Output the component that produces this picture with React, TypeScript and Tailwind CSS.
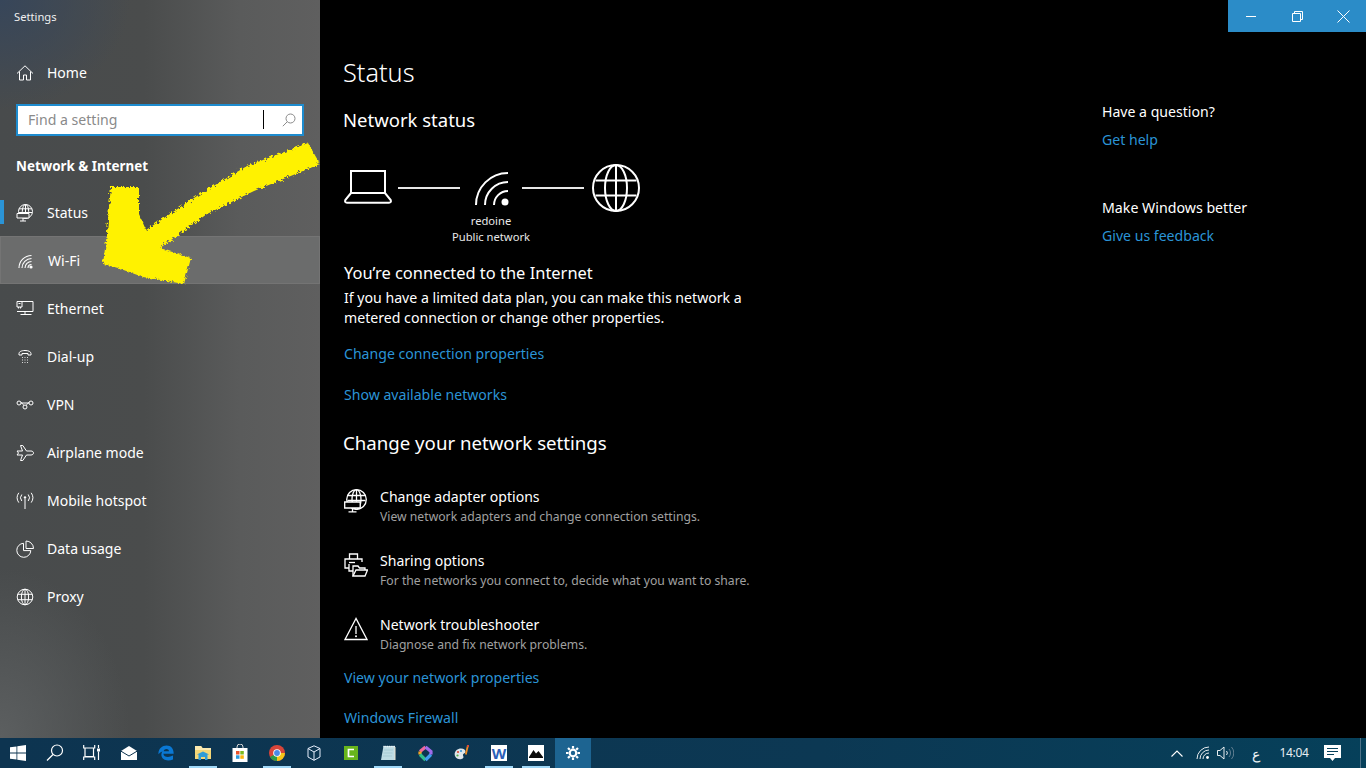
import type { ReactNode } from "react"

/* ─── Icons ─────────────────────────────────────────────────────────── */
function Ico({ children, size = 18, box = 18 }: { children: ReactNode; size?: number; box?: number }) {
  return (
    <svg width={size} height={size} viewBox={`0 0 ${box} ${box}`} fill="none" stroke="currentColor" strokeWidth={1} className="shrink-0">
      {children}
    </svg>
  )
}

const HomeIcon = () => (
  <Ico>
    <path d="M1 9.500 9 1.800l8 7.700M3.500 7.500V16h4v-5h3v5h4V7.500" />
  </Ico>
)
const GlobeStandIcon = () => (
  <Ico>
    <circle cx="9.500" cy="7.500" r="7" />
    <ellipse cx="9.500" cy="7.500" rx="3.200" ry="7" />
    <path d="M3 4.800h13M9.500 .5v9M3 8.500h13" />
    <path d="M1 9.500h12v4.500H1z" fill="#4a4c4d" />
    <path d="M7 14v3M4 17h6" />
  </Ico>
)
const WifiSmall = () => (
  <Ico>
    <path d="M2 16A12.500 12.500 0 0 1 14.500 3.500M5 16A9.500 9.500 0 0 1 14.500 6.500M8 16A6.500 6.500 0 0 1 14.500 9.500M11 16A3.500 3.500 0 0 1 14.500 12.500" strokeWidth={1.100} />
    <circle cx="14" cy="15" r="1.600" fill="currentColor" stroke="none" />
  </Ico>
)
const EthernetIcon = () => (
  <Ico>
    <path d="M6 1.500h11v10H1M9 11.500v3M4.500 14.500h11" />
    <path d="M1 1.500h5V7H1zM2.500 7v1.500M4.500 7v1.500" />
    <path d="M2.500 3.500h2" />
  </Ico>
)
const DialIcon = () => (
  <Ico>
    <path d="M3 7V5.500C3 3.700 5.500 2.500 9 2.500s6 1.200 6 3V7h-3V5.500H6V7z" />
    <path d="M6 9.500h.8M8.600 9.500h.8M11.200 9.500h.8M6 12h.8M8.600 12h.8M11.200 12h.8M6 14.500h.8M8.600 14.500h.8M11.200 14.500h.8" />
  </Ico>
)
const VpnIcon = () => (
  <Ico>
    <circle cx="3" cy="7" r="2" />
    <circle cx="15" cy="7" r="2" />
    <circle cx="9" cy="11" r="2" />
    <path d="M5 6.500c2 1.500 2.500 2 2.800 3M13 6.500c-2 1.500-2.500 2-2.800 3M5 7h8" />
  </Ico>
)
const PlaneIcon = () => (
  <Ico>
    <path d="M1 7h5.500L4.500 1.500h2.300L10.500 7H15c1.500 0 2.500.9 2.500 2s-1 2-2.500 2h-4.500l-3.700 5.500H4.500l2-5.500H1l1.500-2z" />
  </Ico>
)
const HotspotIcon = () => (
  <Ico>
    <path d="M9 7v10" />
    <circle cx="9" cy="5.500" r="1.200" fill="currentColor" stroke="none" />
    <path d="M5.800 2.500a5 5 0 0 0 0 6.500M12.200 2.500a5 5 0 0 1 0 6.500M2.800.8a8.500 8.500 0 0 0 0 9.800M15.200.8a8.500 8.500 0 0 1 0 9.800" />
  </Ico>
)
const PieIcon = () => (
  <Ico>
    <path d="M7.500 3.300a7 7 0 1 0 7.300 7.300H7.500z" />
    <path d="M10 1v7.500h7.500A7.500 7.500 0 0 0 10 1z" />
  </Ico>
)
const GlobeIcon = () => (
  <Ico>
    <circle cx="9" cy="9" r="7.800" />
    <ellipse cx="9" cy="9" rx="3.600" ry="7.800" />
    <path d="M1.800 6.300h14.400M1.800 11.700h14.400M9 1.200v15.600" />
  </Ico>
)
const SearchIcon = () => (
  <svg width="14" height="14" viewBox="0 0 14 14" fill="none" stroke="currentColor" strokeWidth={1}>
    <circle cx="8.500" cy="5.500" r="4.500" />
    <path d="M5.200 8.800.8 13.200" />
  </svg>
)

const DiagramLaptop = () => (
  <svg width="48" height="48" viewBox="0 0 48 48" fill="none" stroke="white" strokeWidth={2}>
    <path d="M7 29V7h34v22" />
    <path d="M7 29 1.300 36q-.8 2.700 1.700 2.700h42q2.500 0 1.700-2.700L41 29z" />
  </svg>
)
const DiagramWifi = () => (
  <svg width="48" height="48" viewBox="0 0 48 48" fill="none" stroke="white" strokeWidth={2}>
    <path d="M9 41A32 32 0 0 1 41 9M18 41A23 23 0 0 1 41 18M27 41A14 14 0 0 1 41 27" />
    <circle cx="38" cy="38" r="3.500" fill="white" stroke="none" />
  </svg>
)
const DiagramGlobe = () => (
  <svg width="48" height="48" viewBox="0 0 48 48" fill="none" stroke="white" strokeWidth={2}>
    <circle cx="24" cy="24" r="23" />
    <ellipse cx="24" cy="24" rx="11" ry="23" />
    <path d="M24 1v46M3.500 16.500h41M3.500 31.500h41" />
  </svg>
)

const LargeGlobeStand = () => (
  <Ico size={24} box={24}>
    <g strokeWidth={1.300}>
      <circle cx="12.500" cy="10.500" r="9.800" />
      <ellipse cx="12.500" cy="10.500" rx="4.500" ry="9.800" />
      <path d="M3.500 6.500h18M12.500 .7v12M3.500 11.500h18" />
      <path d="M.7 13h15.500v6H.7z" fill="black" />
      <path d="M8.500 19v3.500M4.500 22.800h8" />
    </g>
  </Ico>
)
const SharingIcon = () => (
  <Ico size={24} box={24}>
    <g strokeWidth={1.300}>
      <path d="M5.500 6V1h8v5" />
      <path d="M5 15H1V6h17v3" />
      <path d="M5 9.500h6" />
      <path d="M5 11v7h4" />
      <path d="M9 23V13h5l1.500 2H21v2" />
      <path d="M9 23h12l2.500-6H12z" />
    </g>
  </Ico>
)
const WarnIcon = () => (
  <Ico size={24} box={24}>
    <g strokeWidth={1.300}>
      <path d="M12 1.500 1 22.500h22z" />
      <path d="M12 9v8" />
    </g>
    <circle cx="12" cy="19.300" r="1" fill="currentColor" stroke="none" />
  </Ico>
)

/* ─── Taskbar icons ─────────────────────────────────────────────────── */
const task: ReactNode[] = [
  <svg key="win" width="16" height="16" viewBox="0 0 16 16" fill="white">
    <path d="M0 2.300 6.500 1.400v6.200H0zM7.300 1.300 16 0v7.600H7.300zM0 8.400h6.500v6.200L0 13.700zM7.300 8.400H16V16l-8.700-1.300z" />
  </svg>,
  <svg key="search" width="18" height="18" viewBox="0 0 18 18" fill="none" stroke="white" strokeWidth={1.200}>
    <circle cx="11" cy="6.500" r="5.500" />
    <path d="M7 10.500 1 16.500" />
  </svg>,
  <svg key="tv" width="18" height="18" viewBox="0 0 18 18" fill="none" stroke="white" strokeWidth={1.200}>
    <path d="M.7 1v3h11V1M2 4.500v8h8.500v-8M.7 16v-3h11v3M15.500 1v3M15.500 7.500v8.500" />
    <rect x="14" y="4.500" width="3" height="3" fill="white" stroke="none" />
  </svg>,
  <svg key="mail" width="16" height="14" viewBox="0 0 16 14">
    <path d="M8 0 16 5v9H0V5z" fill="white" />
    <path d="M0 5.200 8 10l8-4.800" fill="none" stroke="#0d3450" strokeWidth={1} />
  </svg>,
  <svg key="edge" width="16" height="16" viewBox="0 0 16 16" fill="none">
    <path d="M.5 9.200C0 4 4 .4 8.500.4c4.800 0 7.200 3.400 7.200 8.300H5.400c.3 3.400 5 4.300 9.600 1.900v3.800c-5.200 2.300-11 .8-11.600-3.800C3.200 9 3.500 7.500 4.500 6.200 3 7 1.200 8 .5 9.200zM5.600 6.200h5.400C10.800 3.400 6.500 3.200 5.600 6.200z" fill="#0a78d4" />
  </svg>,
  <svg key="folder" width="16" height="16" viewBox="0 0 16 16">
    <path d="M0 1h6l1.500 2H16v11H0z" fill="#f3d676" />
    <path d="M0 1h6l1.500 2H16v2H0z" fill="#fbeab0" />
    <path d="M3.500 15V9.500L1.800 9.500 8 6.500l6.200 3h-1.700V15H10v-3H6v3z" fill="#2e9bd6" />
  </svg>,
  <svg key="store" width="16" height="18" viewBox="0 0 16 18">
    <path d="M5 5V3a3 3 0 0 1 6 0v2" fill="none" stroke="#d8d8d8" strokeWidth={1} />
    <rect x="0.500" y="4" width="15" height="14" fill="white" />
    <rect x="4" y="7" width="3.500" height="3.500" fill="#e8532b" />
    <rect x="8.300" y="7" width="3.500" height="3.500" fill="#7db91f" />
    <rect x="4" y="11.300" width="3.500" height="3.500" fill="#2a9bdf" />
    <rect x="8.300" y="11.300" width="3.500" height="3.500" fill="#fbb40c" />
  </svg>,
  <svg key="chrome" width="16" height="16" viewBox="0 0 16 16">
    <circle cx="8" cy="8" r="8" fill="#d8453a" />
    <path d="M8 8h8a8 8 0 0 1-8 8z" fill="#f5c518" />
    <path d="M8 8 1 12A8 8 0 0 0 8 16z" fill="#2e9a47" />
    <circle cx="8" cy="8" r="3.800" fill="white" />
    <circle cx="8" cy="8" r="2.900" fill="#4a8ae8" />
  </svg>,
  <svg key="vbox" width="14" height="16" viewBox="0 0 14 16" fill="none" stroke="#e6eefc" strokeWidth={1}>
    <path d="M7 .8 13 3.500v8.500l-6 3.300L1 12V3.500zM1 3.500 7 7l6-3.500M7 7v8.300" />
  </svg>,
  <svg key="cam" width="14" height="14" viewBox="0 0 14 14">
    <rect width="14" height="14" fill="#67b51c" />
    <path d="M10 3.500H4.500v7H10" fill="none" stroke="white" strokeWidth={1.700} />
  </svg>,
  <svg key="notes" width="16" height="16" viewBox="0 0 16 16">
    <path d="M3.500 1H15v14H1z" fill="#bedce4" />
    <path d="M3.500 1.500H15" stroke="#f2f8fa" strokeWidth={1.500} strokeDasharray="1 .8" />
    <path d="M4 5h9M3.500 8h9M3 11h9" stroke="#9fc4cf" strokeWidth={0.700} />
    <path d="M15 2v13" stroke="#ece3d0" strokeWidth={1} />
  </svg>,
  <svg key="shortcut" width="15" height="17" viewBox="0 0 15 17" fill="none" strokeWidth={3.200}>
    <path d="M7.500 2 2 6.500" stroke="#f0689c" />
    <path d="M2 6.500v3" stroke="#f5a623" />
    <path d="M2 9.500l5.500 5.500" stroke="#2fbf8c" />
    <path d="M7.500 15 13 9.500" stroke="#3f9df0" />
    <path d="M13 9.500v-3L7.500 2" stroke="#a06bea" />
  </svg>,
  <svg key="paint" width="16" height="16" viewBox="0 0 16 16">
    <path d="M1 11C-.5 7 3 3.500 7 3.500c3 0 4.500 1.500 4.500 3.500 0 1.500-2 1.300-2.500 2.500-.4 1.200 1 2 .3 3.300C8 15 2.500 15 1 11z" fill="#dfe6ea" />
    <circle cx="4" cy="7" r="1.100" fill="#d94a3a" />
    <circle cx="7" cy="6" r="1.100" fill="#3d9ad6" />
    <circle cx="3.500" cy="10.500" r="1.100" fill="#58b04a" />
    <path d="M14 0 11.800 9.500" stroke="#ef8a1f" strokeWidth={1.800} />
    <path d="M13 0h2v2h-2z" fill="#d94a3a" />
  </svg>,
  <div key="word" className="flex h-[16px] w-[16px] items-center justify-center bg-white">
    <span className="font-['Liberation_Serif',serif] text-[15px] leading-none font-bold text-[#2b5fb8]">W</span>
  </div>,
  <svg key="photos" width="16" height="16" viewBox="0 0 16 16">
    <rect width="16" height="16" fill="white" />
    <path d="M1 12 5.500 5 8 8.500 10.500 6 15 12v1H1z" fill="#0b0b0b" />
  </svg>,
  <svg key="gear" width="14" height="14" viewBox="0 0 14 14" fill="none" stroke="white">
    <circle cx="7" cy="7" r="3.300" strokeWidth={2.200} />
    <path d="M7 0v2.500M7 11.500V14M0 7h2.500M11.500 7H14M2 2l1.800 1.800M10.200 10.200 12 12M2 12l1.800-1.800M10.200 3.800 12 2" strokeWidth={2.200} />
  </svg>,
]

const running = [false, false, false, false, false, true, false, true, false, false, true, false, false, true, true, false]

/* ─── Sidebar ───────────────────────────────────────────────────────── */
const NAV = [
  { label: "Status", icon: <GlobeStandIcon />, active: true },
  { label: "Wi-Fi", icon: <WifiSmall />, hover: true },
  { label: "Ethernet", icon: <EthernetIcon /> },
  { label: "Dial-up", icon: <DialIcon /> },
  { label: "VPN", icon: <VpnIcon /> },
  { label: "Airplane mode", icon: <PlaneIcon /> },
  { label: "Mobile hotspot", icon: <HotspotIcon /> },
  { label: "Data usage", icon: <PieIcon /> },
  { label: "Proxy", icon: <GlobeIcon /> },
]

const SETTINGS_ROWS = [
  { title: "Change adapter options", sub: "View network adapters and change connection settings.", icon: <LargeGlobeStand /> },
  { title: "Sharing options", sub: "For the networks you connect to, decide what you want to share.", icon: <SharingIcon /> },
  { title: "Network troubleshooter", sub: "Diagnose and fix network problems.", icon: <WarnIcon /> },
]

function Link({ children, className = "" }: { children: ReactNode; className?: string }) {
  return <a className={`block text-[14.100px] leading-[20px] text-[#2b94d6] ${className}`}>{children}</a>
}

export default function App() {
  return (
    <div className="relative flex h-[768px] w-[1366px] flex-col overflow-hidden bg-black font-['Open_Sans',sans-serif] text-white">
      <div className="flex min-h-0 flex-1">
        {/* Sidebar */}
        <aside className="flex w-[320px] shrink-0 flex-col bg-[radial-gradient(ellipse_130px_110px_at_0px_0px,#37465a,transparent),radial-gradient(ellipse_130px_170px_at_0px_100%,#5c5f60,transparent),linear-gradient(90deg,#484b4c_0%,#4a4c4c_45%,#5a5b5b_75%,#5f5f5f_100%)]">
          <div className="flex h-[34px] items-center pl-[14px] text-[11.200px] text-[#f0f0f0]">Settings</div>
          <div className="mt-[14px] flex h-[48px] items-center pt-[1px] pl-[16px] text-[14px]">
            <HomeIcon />
            <span className="ml-[13px]">Home</span>
          </div>
          <div className="relative mx-[16px] mt-[8px] flex h-[32px] items-center justify-between border-2 border-[#1e8ccf] bg-white pr-[6px] pl-[10px] text-[14.100px] text-[#8a8a8a]">
            <span>Find a setting</span>
            <SearchIcon />
            <div className="absolute top-[4px] left-[245px] h-[19px] w-[1px] bg-black" />
          </div>
          <div className="mt-[18px] pl-[16px] text-[13.400px] leading-[24px] font-bold">Network &amp; Internet</div>
          <nav className="mt-[10px] flex flex-col">
            {NAV.map(n => (
              <div
                key={n.label}
                className={`relative flex h-[48px] items-center pt-[1px] pl-[16px] text-[14px] ${n.hover ? "border border-[#747474] bg-[#6b6c6c] pl-[15px]" : ""}`}
              >
                {n.active && <div className="absolute top-[12px] left-0 h-[24px] w-[4px] bg-[#2b94d6]" />}
                {n.icon}
                <span className="ml-[13px]">{n.label}</span>
              </div>
            ))}
          </nav>
        </aside>

        {/* Content */}
        <main className="min-w-0 flex-1 pt-[52px] pl-[24px]">
          <h1 className="-ml-px text-[25.300px] leading-[40px] font-light">Status</h1>
          <h2 className="mt-[14px] -ml-px text-[18.500px] leading-[28px] font-normal">Network status</h2>

          <div className="mt-[30px] flex items-start">
            <DiagramLaptop />
            <div className="mt-[23px] ml-[6px] h-[2px] w-[62px] bg-[#e6e6e6]" />
            <div className="ml-[7px] flex w-[48px] flex-col items-center">
              <DiagramWifi />
              <span className="mt-px text-[11.200px] leading-[16px] whitespace-nowrap text-[#e8e8e8]">redoine</span>
              <span className="text-[11.200px] leading-[16px] whitespace-nowrap text-[#e8e8e8]">Public network</span>
            </div>
            <div className="mt-[23px] ml-[7px] h-[2px] w-[62px] bg-[#e6e6e6]" />
            <div className="ml-[8px]">
              <DiagramGlobe />
            </div>
          </div>

          <p className="mt-[16px] text-[16.450px] leading-[24px]">You’re connected to the Internet</p>
          <p className="mt-[3px] w-[420px] text-[14.130px] leading-[20px]">
            If you have a limited data plan, you can make this network a metered connection or change other properties.
          </p>
          <Link className="mt-[16px]">Change connection properties</Link>
          <Link className="mt-[21px]">Show available networks</Link>

          <h2 className="mt-[24px] -ml-px text-[18.650px] leading-[28px] font-normal">Change your network settings</h2>

          <div className="mt-[30px] flex flex-col gap-[24px]">
            {SETTINGS_ROWS.map(r => (
              <div key={r.title} className="flex items-start">
                <div className="mt-[2px]">{r.icon}</div>
                <div className="ml-[12px]">
                  <div className="text-[14.050px] leading-[20px]">{r.title}</div>
                  <div className="text-[12.200px] leading-[20px] text-[#a0a0a0]">{r.sub}</div>
                </div>
              </div>
            ))}
          </div>
          <Link className="mt-[13px]">View your network properties</Link>
          <Link className="mt-[20px]">Windows Firewall</Link>
        </main>

        {/* Help column + window buttons */}
        <div className="flex w-[264px] shrink-0 flex-col">
          <div className="flex h-[32px] w-[138px] items-center self-end bg-[#2b8cc8]">
            <div className="flex w-[46px] justify-center">
              <div className="h-px w-[10px] bg-white" />
            </div>
            <div className="flex w-[46px] justify-center">
              <svg width="11" height="11" viewBox="0 0 11 11" fill="none" stroke="white">
                <path d="M.5 2.500h8v8h-8zM2.500 2.500v-2h8v8h-2" />
              </svg>
            </div>
            <div className="flex w-[46px] justify-center">
              <svg width="13" height="13" viewBox="0 0 13 13" fill="none" stroke="white">
                <path d="m.5.5 12 12M12.500.5l-12 12" />
              </svg>
            </div>
          </div>
          <p className="mt-[70px] text-[14.100px] leading-[20px]">Have a question?</p>
          <Link className="mt-[8px]">Get help</Link>
          <p className="mt-[48px] text-[14.200px] leading-[20px]">Make Windows better</p>
          <Link className="mt-[8px]">Give us feedback</Link>
        </div>
      </div>

      {/* Taskbar */}
      <footer className="flex h-[30px] shrink-0 items-center gap-px bg-[linear-gradient(90deg,#0d3450,#0c3853_60%,#06405a)]">
        {task.map((t, i) => (
          <div key={i} className={`relative flex h-full w-[36px] items-center justify-center ${i === 15 ? "bg-[#1d6491]" : ""}`}>
            {t}
            {running[i] && <div className="absolute bottom-0 left-[4px] h-[2px] w-[28px] bg-[#9fd8f8]" />}
          </div>
        ))}
        <div className="ml-auto flex h-full items-center text-[#e8eef2]">
          <svg width="12" height="7" viewBox="0 0 12 7" fill="none" stroke="white" strokeWidth={1.100}>
            <path d="M.5 6.500 6 1l5.500 5.500" />
          </svg>
          <div className="ml-[13px]">
            <svg width="14" height="14" viewBox="0 0 14 14" fill="none" stroke="white" strokeWidth={0.900}>
              <path d="M1 13A12 12 0 0 1 13 1M4 13A9 9 0 0 1 13 4M7 13a6 6 0 0 1 6-6" />
              <circle cx="11.500" cy="11.500" r="1.400" fill="white" stroke="none" />
            </svg>
          </div>
          <div className="ml-[7px]">
            <svg width="17" height="14" viewBox="0 0 17 14" fill="none" stroke="white" strokeWidth={0.900}>
              <path d="M.5 4.500h2.500L7 1v12L3 9.500H.5z" />
              <path d="M9.500 5a3 3 0 0 1 0 4" />
              <path d="M12 3a6 6 0 0 1 0 8M14.500 1a9 9 0 0 1 0 12" stroke="#6c8799" />
            </svg>
          </div>
          <span className="ml-[15px] w-[14px] text-center font-['DejaVu_Sans',sans-serif] text-[14px]">ع</span>
          <span className="ml-[16px] w-[30px] text-center text-[12px] tracking-[-0.3px]">14:04</span>
          <div className="ml-[15px]">
            <svg width="17" height="16" viewBox="0 0 17 16">
              <path d="M0 0h17v13h-6l-2.500 3L6 13H0z" fill="white" />
              <path d="M3 3.500h11M3 6.500h11M3 9.500h7" stroke="#06405a" />
            </svg>
          </div>
          <div className="mr-[5px] ml-[19px] h-full w-px bg-[#4d7389]" />
        </div>
      </footer>

      {/* Yellow hand-drawn arrow annotation */}
      <svg className="pointer-events-none absolute top-0 left-0" width="330" height="300" viewBox="0 0 330 300">
        <defs>
          <filter id="rough" x="-5%" y="-5%" width="110%" height="110%">
            <feTurbulence type="fractalNoise" baseFrequency="0.4" numOctaves="2" seed="4" />
            <feDisplacementMap in="SourceGraphic" scale="6" />
          </filter>
        </defs>
        <path
          d="M111 187 139 187 139 214 146 230 200 194 247 166 308 143 320 164 254 191 207 214 160 248 191 258 184 284 143 277 118 268 103 264 107 233 109 207z"
          fill="#fff200"
          filter="url(#rough)"
        />
      </svg>
    </div>
  )
}
